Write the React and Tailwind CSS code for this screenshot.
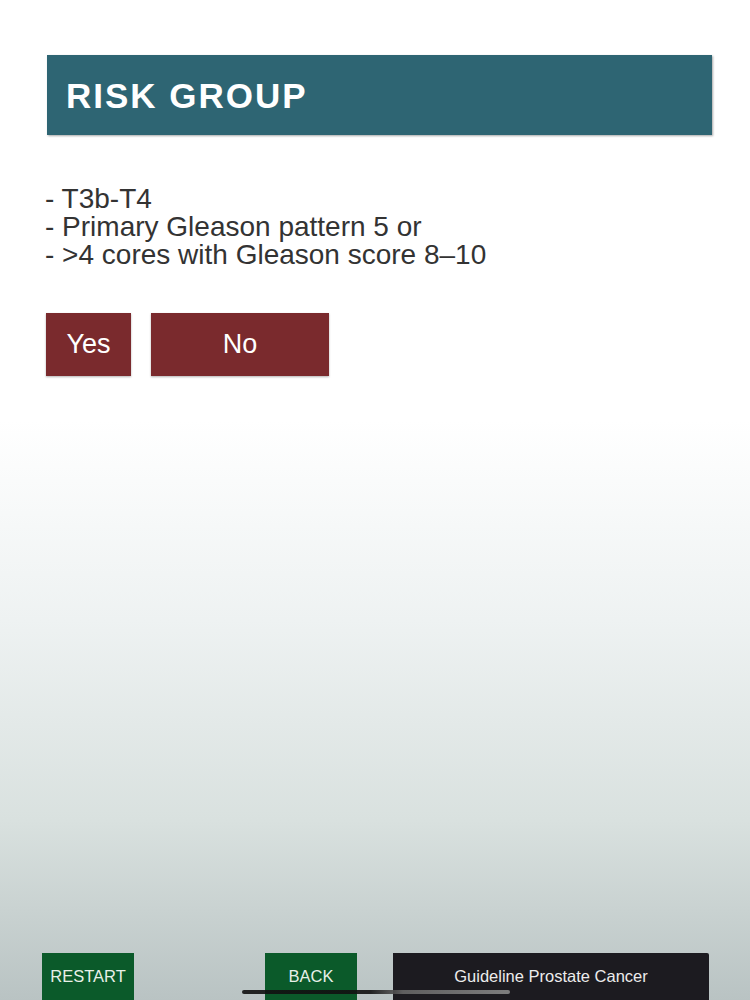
export default function App() {
  return (
    <div
      className="relative w-[750px] h-[1000px] overflow-hidden bg-[linear-gradient(to_bottom,#ffffff_0%,#ffffff_42%,#eef2f2_62%,#d9e1df_82%,#b9c3c3_100%)]"
      style={{ fontFamily: '"Liberation Sans", Arial, sans-serif' }}
    >
      <div className="pt-[55px] pl-[47px] pr-[38px]">
        {/* Header */}
        <div className="h-[80px] bg-[#2e6573] flex items-center pl-[19px] shadow-[1px_1px_2px_rgba(0,0,0,0.35)]">
          <h1 className="text-white font-bold text-[35px] tracking-[2px] leading-none">RISK GROUP</h1>
        </div>

        {/* Criteria */}
        <div className="mt-[50px] -ml-[2px] text-[#333333] text-[28px] leading-[28px]">
          <p>- T3b-T4</p>
          <p>- Primary Gleason pattern 5 or</p>
          <p>- &gt;4 cores with Gleason score 8–10</p>
        </div>

        {/* Answers */}
        <div className="mt-[44px] -ml-[1px] flex gap-[20px]">
          <button className="w-[85px] h-[63px] bg-[#7a2a2d] text-white text-[27px] shadow-[0_1px_2px_rgba(0,0,0,0.3)]">
            Yes
          </button>
          <button className="w-[178px] h-[63px] bg-[#7a2a2d] text-white text-[27px] shadow-[0_1px_2px_rgba(0,0,0,0.3)]">
            No
          </button>
        </div>
      </div>

      {/* Bottom bar */}
      <div className="absolute left-0 right-0 top-[953px] h-[60px] flex text-[16.5px]">
        <button className="ml-[42px] w-[92px] h-full bg-[#0b5a2a] text-[#e8f0e8] flex items-start justify-center pt-[11px]">
          RESTART
        </button>
        <button className="ml-[131px] w-[92px] h-full bg-[#0b5a2a] text-[#e8f0e8] flex items-start justify-center pt-[11px]">
          BACK
        </button>
        <div className="ml-[36px] w-[316px] h-full bg-[#1c1b20] text-[#ececec] rounded-tr-[2px] flex items-start justify-center pt-[11px]">
          Guideline Prostate Cancer
        </div>
      </div>

      {/* Home indicator */}
      <div className="absolute left-[242px] top-[990px] w-[268px] h-[4px] rounded-full bg-[linear-gradient(to_right,#111_0%,#111_48%,#666_60%,#888_100%)] opacity-90" />
    </div>
  );
}
